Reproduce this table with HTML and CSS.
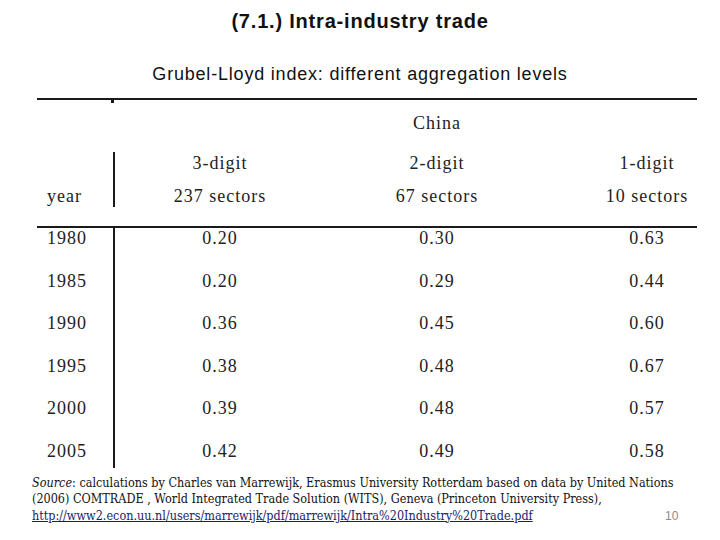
FILE: index.html
```html
<!DOCTYPE html>
<html>
<head>
<meta charset="utf-8">
<link rel="stylesheet" href="styles.css">
</head>
<body>
<div class="slide">
  <h1 class="title">(7.1.) Intra-industry trade</h1>
  <h2 class="subtitle">Grubel-Lloyd index: different aggregation levels</h2>
  <div class="table">
    <div class="row head1">
      <div class="cell year"></div>
      <div class="cell c1"></div>
      <div class="cell c2">China</div>
      <div class="cell c3"></div>
    </div>
    <div class="row head2">
      <div class="cell year"><div class="l1">&nbsp;</div><div class="l2">year</div></div>
      <div class="cell c1"><div class="l1">3-digit</div><div class="l2">237 sectors</div></div>
      <div class="cell c2"><div class="l1">2-digit</div><div class="l2">67 sectors</div></div>
      <div class="cell c3"><div class="l1">1-digit</div><div class="l2">10 sectors</div></div>
    </div>
    <div class="row body"><div class="cell year">1980</div><div class="cell c1">0.20</div><div class="cell c2">0.30</div><div class="cell c3">0.63</div></div>
    <div class="row body"><div class="cell year">1985</div><div class="cell c1">0.20</div><div class="cell c2">0.29</div><div class="cell c3">0.44</div></div>
    <div class="row body"><div class="cell year">1990</div><div class="cell c1">0.36</div><div class="cell c2">0.45</div><div class="cell c3">0.60</div></div>
    <div class="row body"><div class="cell year">1995</div><div class="cell c1">0.38</div><div class="cell c2">0.48</div><div class="cell c3">0.67</div></div>
    <div class="row body"><div class="cell year">2000</div><div class="cell c1">0.39</div><div class="cell c2">0.48</div><div class="cell c3">0.57</div></div>
    <div class="row body last"><div class="cell year">2005</div><div class="cell c1">0.42</div><div class="cell c2">0.49</div><div class="cell c3">0.58</div></div>
  </div>
  <p class="source"><em>Source</em>: calculations by Charles van Marrewijk, Erasmus University Rotterdam based on data by United Nations<br>(2006) COMTRADE , World Integrated Trade Solution (WITS), Geneva (Princeton University Press),<br><a class="link" href="#">http://www2.econ.uu.nl/users/marrewijk/pdf/marrewijk/Intra%20Industry%20Trade.pdf</a></p>
  <span class="page">10</span>
</div>
</body>
</html>
```
FILE: styles.css
```css
html, body {
  margin: 0;
  padding: 0;
  background: #ffffff;
}

.slide {
  position: relative;
  width: 720px;
  height: 540px;
  overflow: hidden;
  background: #ffffff;
}

.title {
  margin: 0;
  padding-top: 9px;
  height: 24px;
  line-height: 24px;
  text-align: center;
  font-family: "Liberation Sans", Arial, sans-serif;
  font-weight: bold;
  font-size: 20px;
  letter-spacing: 0.8px;
  color: #111111;
}

.subtitle {
  margin: 0;
  padding-top: 30px;
  height: 22px;
  line-height: 22px;
  text-align: center;
  font-family: "Liberation Sans", Arial, sans-serif;
  font-weight: normal;
  font-size: 18px;
  letter-spacing: 0.8px;
  color: #111111;
}

.table {
  position: relative;
  margin: 13px 0 0 37px;
  width: 660px;
  border-top: 2px solid #1a1a1a;
  font-family: "Liberation Serif", "Times New Roman", serif;
  font-size: 18px;
  letter-spacing: 1px;
  color: #222222;
}

.table::after {
  content: "";
  position: absolute;
  left: 74px;
  top: 0;
  width: 3px;
  height: 3px;
  background: #1a1a1a;
}

.row {
  display: grid;
  grid-template-columns: 76px 212px 224px 148px;
}

.cell {
  text-align: center;
}

.cell.year {
  text-align: left;
  padding-left: 10px;
}

.cell.c3 {
  padding-left: 48px;
  width: 100px;
}

.head1 {
  height: 52px;
}

.head1 .cell {
  padding-top: 12px;
  line-height: 22px;
}

.head2 {
  padding-bottom: 19px;
  border-bottom: 2px solid #1a1a1a;
  line-height: 22px;
}

.head2 .l2 {
  margin-top: 11px;
}

.head2 .c1,
.body .c1 {
  border-left: 2px solid #1a1a1a;
}

.body {
  line-height: 20px;
}

.body .cell {
  padding-bottom: 22.5px;
}

.body.last .cell {
  padding-bottom: 7px;
}

.source {
  margin: 7px 0 0 32px;
  font-family: "DejaVu Serif", "Liberation Serif", serif;
  font-stretch: condensed;
  font-size: 12.5px;
  line-height: 16.5px;
  white-space: nowrap;
  color: #111111;
}

.link {
  color: #1c1c6a;
  text-decoration: underline;
}

.page {
  position: absolute;
  left: 665px;
  top: 508px;
  font-family: "Liberation Sans", Arial, sans-serif;
  font-size: 12px;
  line-height: 16px;
  color: #8a8a8a;
}
```
